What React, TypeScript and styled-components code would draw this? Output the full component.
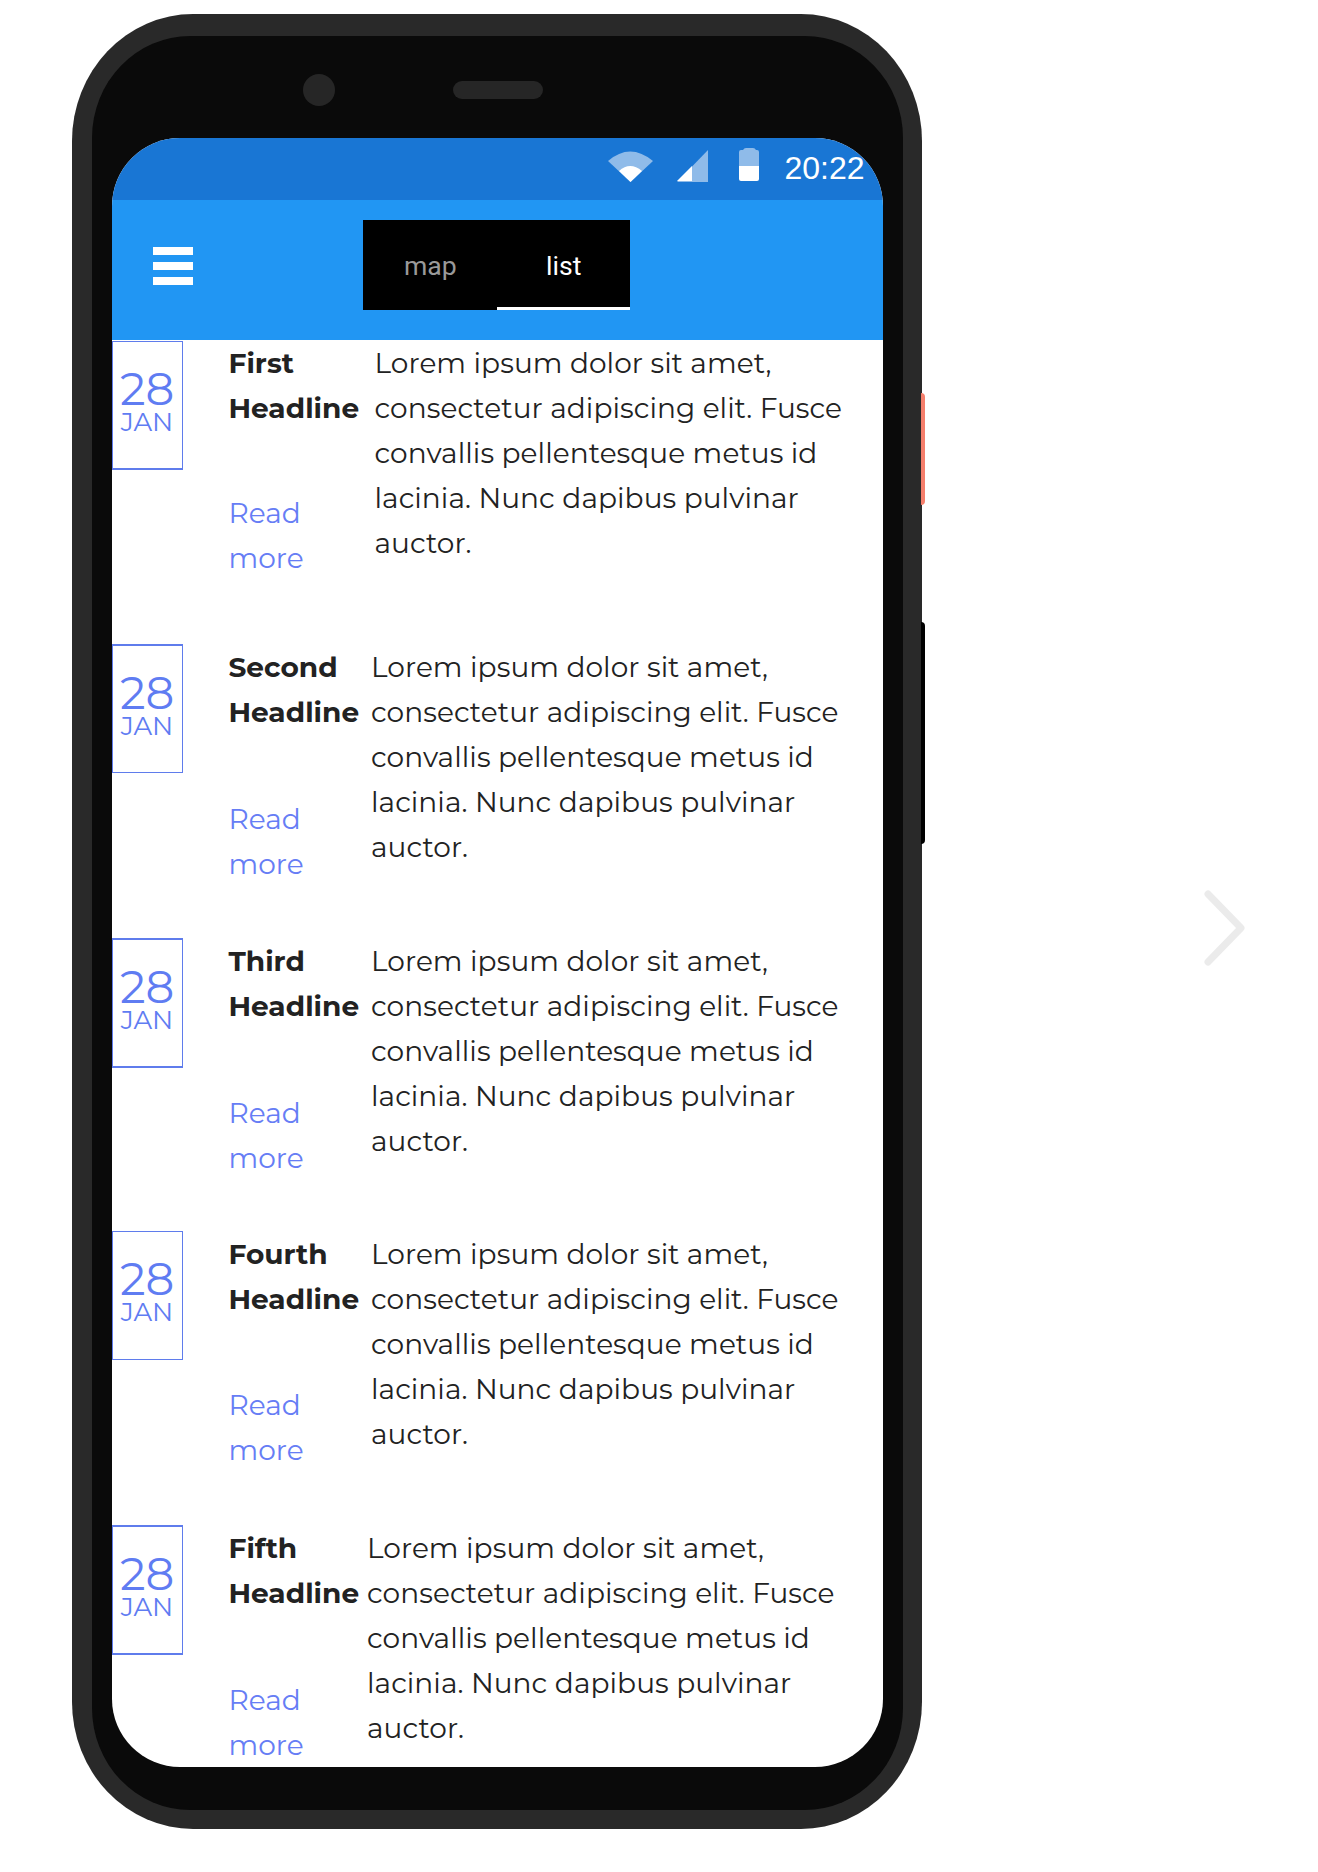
import React from "react";
import styled, { createGlobalStyle } from "styled-components";

const Global = createGlobalStyle`
  * { box-sizing: border-box; }
  body { margin: 0; background: #fff; overflow: hidden; }
`;

const Page = styled.div`
  width: 1318px;
  height: 1872px;
  display: flex;
  align-items: flex-start;
  padding: 14px 0 0 72px;
  background: #fff;
  overflow: hidden;
`;

const Phone = styled.div`
  position: relative;
  width: 849.5px;
  height: 1815px;
  padding: 22px 19px 19px 20px;
  border-radius: 121px / 127px;
  background: #292929;
`;

const SideButton = styled.div<{ $top: number; $height: number; $color: string }>`
  position: absolute;
  left: 849px;
  top: ${(p) => p.$top}px;
  width: 4px;
  height: ${(p) => p.$height}px;
  border-radius: 0 4px 4px 0;
  background: ${(p) => p.$color};
`;

const Bezel = styled.div`
  height: 1774px;
  border-radius: 98px / 102px;
  padding: 0 20px;
  background: #0a0a0a;
`;

const SensorBar = styled.div`
  height: 102px;
  display: flex;
  align-items: center;
  padding: 6px 0 0 190.5px;
  gap: 118px;
`;

const Camera = styled.div`
  width: 32px;
  height: 32px;
  border-radius: 50%;
  background: #262626;
`;

const Speaker = styled.div`
  width: 90px;
  height: 18px;
  border-radius: 9px;
  background: #262626;
`;

const Screen = styled.div`
  height: 1629px;
  border-radius: 68px;
  overflow: hidden;
  background: #fff;
`;

const StatusBar = styled.div`
  height: 62px;
  display: flex;
  justify-content: flex-end;
  padding: 10px 18px 0 0;
  background: #1976d4;
  color: #fff;
`;

const StatusIcons = styled.svg`
  width: 152px;
  height: 36px;
  margin-right: 24.5px;
`;

const Clock = styled.span`
  font: 32px/41px "Liberation Sans", Arial, sans-serif;
  width: 80px;
  white-space: nowrap;
`;

const AppBar = styled.header`
  height: 140px;
  display: grid;
  grid-template-columns: 251px 267px 1fr;
  padding-top: 20px;
  background: #2196f3;
`;

const MenuButton = styled.div`
  display: flex;
  flex-direction: column;
  gap: 7px;
  padding: 27px 0 0 41px;
`;

const MenuBar = styled.div`
  width: 40px;
  height: 8px;
  background: #fff;
`;

const Tabs = styled.nav`
  height: 90px;
  display: flex;
  background: #000;
`;

const Tab = styled.div<{ $active?: boolean }>`
  flex: 1;
  text-align: center;
  padding-left: 1px;
  font: 26.6px/91px Roboto, sans-serif;
  color: ${(p) => (p.$active ? "#fff" : "#999")};
  box-shadow: ${(p) => (p.$active ? "inset 0 -3px #fff" : "none")};
  height: 90px;
`;

const List = styled.main`
  font-family: Montserrat, Inter, sans-serif;
  font-size: 28px;
  line-height: 45px;
  color: #222;
`;

const Row = styled.article<{ $height: number; $gap: number }>`
  height: ${(p) => p.$height}px;
  display: grid;
  grid-template-columns: 71px 45.5px ${(p) => p.$gap}px 1fr;
  padding-top: 1px;
`;

const DateBox = styled.div<{ $shift: number; $height: number; $edges: string }>`
  height: ${(p) => p.$height}px;
  margin-top: ${(p) => p.$shift}px;
  display: flex;
  flex-direction: column;
  align-items: center;
  padding: 24px 1px 0 0;
  border: 1px solid #5f7cec;
  border-width: ${(p) => p.$edges};
  color: #5f7cf2;
`;

const Day = styled.span`
  font-size: 45px;
  line-height: 46px;
  letter-spacing: -0.2px;
`;

const Month = styled.span`
  font-size: 26px;
  line-height: 20px;
`;

const Side = styled.div`
  grid-column: 3;
`;

const Headline = styled.div`
  width: 131px;
  white-space: nowrap;
  font-weight: 700;
`;

const ReadMore = styled.a<{ $offset: number }>`
  display: block;
  width: 90px;
  margin-top: ${(p) => p.$offset}px;
  color: #667df5;
`;

const Line = styled.span`
  display: block;
  white-space: nowrap;
`;

const Body = styled.div`
  letter-spacing: 0.06px;
`;

const NextArrow = styled.svg`
  width: 50px;
  height: 84px;
  margin: 872px 0 0 277.5px;
`;

const paragraph = [
  "Lorem ipsum dolor sit amet,",
  "consectetur adipiscing elit. Fusce",
  "convallis pellentesque metus id",
  "lacinia. Nunc dapibus pulvinar",
  "auctor.",
];

const entries = [
  { name: "First", height: 304, gap: 146, offset: 60, shift: 0, box: 129, edges: "1px 1px 2px" },
  { name: "Second", height: 294, gap: 142.5, offset: 62, shift: -1, box: 129, edges: "2px 1px 1px" },
  { name: "Third", height: 293, gap: 142.5, offset: 62, shift: -1, box: 130, edges: "2px 1px" },
  { name: "Fourth", height: 294, gap: 142.5, offset: 61, shift: -1, box: 129, edges: "1px" },
  { name: "Fifth", height: 290, gap: 138.5, offset: 62, shift: -1, box: 130, edges: "2px 1px" },
];

export default function App() {
  return (
    <Page>
      <Global />
      <Phone>
        <SideButton $top={379} $height={112} $color="#f57f6c" />
        <SideButton $top={608} $height={222} $color="#000" />
        <Bezel>
          <SensorBar>
            <Camera />
            <Speaker />
          </SensorBar>
          <Screen>
            <StatusBar>
              <StatusIcons viewBox="0 0 152 36">
                <path d="M0 13Q22-6 45 13L22.5 34Z" fill="#8fbbe9" />
                <path d="M11 23Q22 13 34 23L22.5 34Z" fill="#fff" />
                <path d="M69 34L100 2V34Z" fill="#8fbbe9" />
                <path d="M69 33L84 18V33Z" fill="#fff" />
                <path d="M131 18V4Q131 2 133 2H135Q136 0 138 0H145Q147 0 148 2H149Q151 2 151 4V18Z" fill="#8fbbe9" />
                <path d="M131 18H151V31Q151 33 149 33H133Q131 33 131 31Z" fill="#fff" />
              </StatusIcons>
              <Clock>20:22</Clock>
            </StatusBar>
            <AppBar>
              <MenuButton>
                <MenuBar />
                <MenuBar />
                <MenuBar />
              </MenuButton>
              <Tabs>
                <Tab>map</Tab>
                <Tab $active>list</Tab>
              </Tabs>
            </AppBar>
            <List>
              {entries.map((e) => (
                <Row key={e.name} $height={e.height} $gap={e.gap}>
                  <DateBox $shift={e.shift} $height={e.box} $edges={e.edges}>
                    <Day>28</Day>
                    <Month>JAN</Month>
                  </DateBox>
                  <Side>
                    <Headline>
                      <Line>{e.name}</Line>
                      <Line>Headline</Line>
                    </Headline>
                    <ReadMore $offset={e.offset}>
                      <Line>Read</Line>
                      <Line>more</Line>
                    </ReadMore>
                  </Side>
                  <Body>
                    {paragraph.map((text) => (
                      <Line key={text}>{text}</Line>
                    ))}
                  </Body>
                </Row>
              ))}
            </List>
          </Screen>
        </Bezel>
      </Phone>
      <NextArrow viewBox="0 0 50 84" fill="none" stroke="#ebebeb" strokeWidth="7" strokeLinecap="round" strokeLinejoin="round">
        <path d="M9 8L42 42L9 76" />
      </NextArrow>
    </Page>
  );
}
